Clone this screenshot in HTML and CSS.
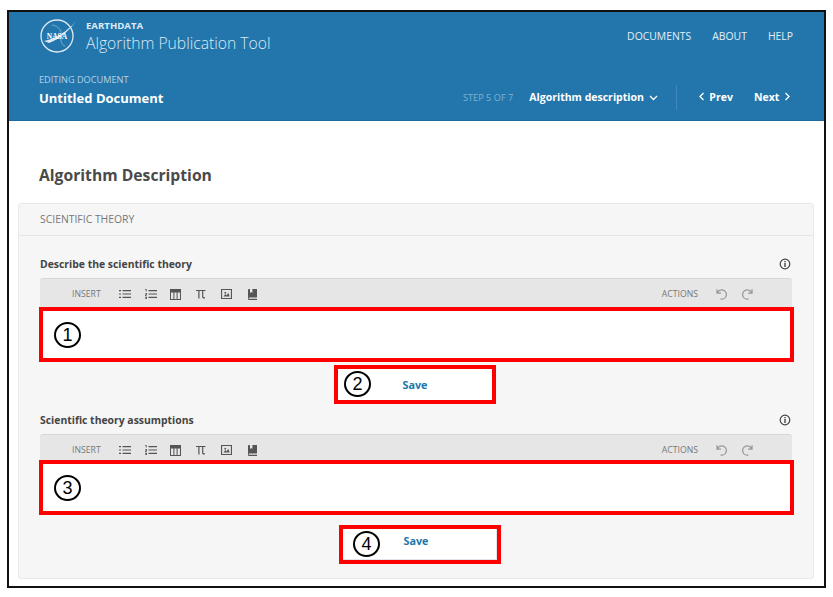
FILE: index.html
```html
<!DOCTYPE html>
<html lang="en">
<head>
  <meta charset="UTF-8" />
  <title>Algorithm Publication Tool</title>
  <link rel="stylesheet" href="styles.css">
</head>
<body>
  <svg class="sprites" width="0" height="0">
    <symbol id="i-ul" viewBox="0 0 12 10"><path d="M0 1h2v1.200H0zM3.500 1H12v1.200H3.500zM0 4.400h2v1.200H0zM3.500 4.400H12v1.200H3.500zM0 7.800h2V9H0zM3.500 7.800H12V9H3.500z" fill="#555"/></symbol>
    <symbol id="i-ol" viewBox="0 0 12 10"><path d="M0 0h1.600v2.600H.8V.8H0zM0 4h2v2H.8v.6H2v.6H0V5.400h1.200v-.8H0zM0 8h2v2H0v-.6h1.200v-.2H.4v-.4h.8v-.2H0zM3.500 1H12v1.200H3.500zM3.500 4.400H12v1.200H3.500zM3.500 7.800H12V9H3.500z" fill="#555"/></symbol>
    <symbol id="i-table" viewBox="0 0 11 11"><path d="M0 0h11v11H0zM1 3.400V10h2.400V3.400zm3.400 0V10h2.200V3.400zm3.200 0V10H10V3.400z" fill="#555" fill-rule="evenodd"/></symbol>
    <symbol id="i-pi" viewBox="0 0 10 10"><path d="M0 1h9.500v1.100H7.300v5.500c0 .6.300.8 1.700.7v1.100c-2 .2-2.900-.3-2.900-1.700V2.100H3.500v7.400H2.300V2.100H0z" fill="#555"/></symbol>
    <symbol id="i-img" viewBox="0 0 11 10"><path d="M0 0h11v10H0zM1.100 1.100v7.800h8.800V1.100z" fill="#555" fill-rule="evenodd"/><path d="M2.400 7.400l2-2.400 1.300 1.400 1.600-2.600 1.400 3.600zM3.400 3.800a.9.9 0 1 0 0-.1z" fill="#555"/></symbol>
    <symbol id="i-book" viewBox="0 0 9 11"><path d="M0 1.200C0 .4.500 0 1.200 0H2v4l1.200-1 1.200 1V0H9v8.600H1.400c-.5 0-.8.200-.8.500s.3.600.8.600H9V11H1.400C.5 11 0 10.300 0 9.400z" fill="#555"/></symbol>
    <symbol id="i-undo" viewBox="0 0 12 12"><path d="M1 1.200v4h4M1.400 5a4.600 4.600 0 1 1 3.200 6" fill="none" stroke="#999" stroke-width="1.300"/></symbol>
    <symbol id="i-redo" viewBox="0 0 12 12"><path d="M11 1.200v4H7M10.600 5a4.600 4.600 0 1 0-3.200 6" fill="none" stroke="#999" stroke-width="1.300"/></symbol>
    <symbol id="i-info" viewBox="0 0 12 12"><circle cx="6" cy="6" r="4.800" fill="none" stroke="#444" stroke-width="1.200"/><path d="M5.300 2.900h1.400v1.300H5.300zM5.300 5h1.400v4H5.300z" fill="#444"/></symbol>
  </svg>

  <div class="frame">
    <header class="masthead">
      <div class="top-row">
        <div class="brand">
          <svg class="logo" width="40" height="36" viewBox="0 0 40 36">
            <circle cx="18" cy="18" r="16" fill="none" stroke="#dfeaf2" stroke-width="1.300"/>
            <path d="M5 23c11-2 24-10 32-20-6 9-16 18-27 22z" fill="#dfeaf2"/>
            <path d="M13 7c7 1 10 6 9 11s1 9 4 10" fill="none" stroke="#9fc4dc" stroke-width=".7"/>
            <text x="18" y="21" class="logo-text" text-anchor="middle">NASA</text>
          </svg>
          <div class="brand-text">
            <div class="brand-small">EARTHDATA</div>
            <div class="brand-name">Algorithm Publication Tool</div>
          </div>
        </div>
        <nav class="main-nav">
          <a>DOCUMENTS</a>
          <a>ABOUT</a>
          <a>HELP</a>
        </nav>
      </div>
      <div class="doc-row">
        <div class="doc-title">
          <div class="doc-eyebrow">EDITING DOCUMENT</div>
          <div class="doc-name">Untitled Document</div>
        </div>
        <div class="stepper">
          <span class="step-count">STEP 5 OF 7</span>
          <span class="step-name">Algorithm description
            <svg width="9" height="6" viewBox="0 0 9 6"><path d="M1 1l3.500 3.500L8 1" class="chev"/></svg>
          </span>
          <span class="step-divider"></span>
          <span class="step-link prev">
            <svg width="7" height="9" viewBox="0 0 7 9"><path d="M5.500 1L2 4.500 5.500 8" class="chev"/></svg>
            Prev
          </span>
          <span class="step-link next">Next
            <svg width="7" height="9" viewBox="0 0 7 9"><path d="M1.500 1L5 4.500 1.500 8" class="chev"/></svg>
          </span>
        </div>
      </div>
    </header>

    <main class="content">
      <h1>Algorithm Description</h1>
      <section class="panel">
        <div class="panel-head">SCIENTIFIC THEORY</div>
        <div class="panel-body">

          <div class="field-label first">
            <span>Describe the scientific theory</span>
            <svg width="12" height="12"><use href="#i-info"/></svg>
          </div>
          <div class="toolbar">
            <span class="tool-label">INSERT</span>
            <svg class="t-ul" width="12" height="10"><use href="#i-ul"/></svg>
            <svg class="t-ol" width="12" height="10"><use href="#i-ol"/></svg>
            <svg class="t-table" width="11" height="11"><use href="#i-table"/></svg>
            <svg class="t-pi" width="10" height="10"><use href="#i-pi"/></svg>
            <svg class="t-img" width="11" height="10"><use href="#i-img"/></svg>
            <svg class="t-book" width="9" height="11"><use href="#i-book"/></svg>
            <span class="tool-label actions">ACTIONS</span>
            <svg class="t-undo" width="12" height="12"><use href="#i-undo"/></svg>
            <svg class="t-redo" width="12" height="12"><use href="#i-redo"/></svg>
          </div>
          <div class="editor"><span class="marker">1</span></div>
          <div class="save-row">
            <button class="save-btn"><span class="marker">2</span>Save</button>
          </div>

          <div class="field-label">
            <span>Scientific theory assumptions</span>
            <svg width="12" height="12"><use href="#i-info"/></svg>
          </div>
          <div class="toolbar">
            <span class="tool-label">INSERT</span>
            <svg class="t-ul" width="12" height="10"><use href="#i-ul"/></svg>
            <svg class="t-ol" width="12" height="10"><use href="#i-ol"/></svg>
            <svg class="t-table" width="11" height="11"><use href="#i-table"/></svg>
            <svg class="t-pi" width="10" height="10"><use href="#i-pi"/></svg>
            <svg class="t-img" width="11" height="10"><use href="#i-img"/></svg>
            <svg class="t-book" width="9" height="11"><use href="#i-book"/></svg>
            <span class="tool-label actions">ACTIONS</span>
            <svg class="t-undo" width="12" height="12"><use href="#i-undo"/></svg>
            <svg class="t-redo" width="12" height="12"><use href="#i-redo"/></svg>
          </div>
          <div class="editor overlap"><span class="marker">3</span></div>
          <div class="save-row second">
            <button class="save-btn"><span class="marker">4</span>Save</button>
          </div>

        </div>
      </section>
    </main>
  </div>
</body>
</html>
```

FILE: styles.css
```css
* {
  box-sizing: border-box;
}
html, body {
  margin: 0;
  height: 597px;
  overflow: hidden;
}
body {
  background: #fff;
  font-family: "Open Sans", sans-serif;
  color: #444;
}
.sprites {
  position: absolute;
}
.frame {
  width: 819px;
  height: 578px;
  margin: 10px 0 0 7px;
  border: 2px solid #111;
  background: #fff;
}

/* header */
.masthead {
  height: 109px;
  background: #2276ac;
  border-bottom: 1px solid #1d6a9c;
  color: #fff;
}
.top-row {
  display: flex;
  justify-content: space-between;
  height: 60px;
  padding: 6px 31px 0 30px;
}
.brand {
  display: flex;
}
.logo {
  margin-right: 7px;
}
.logo-text {
  font: 700 7.5px "Liberation Serif", serif;
  fill: #fff;
}
.brand-text {
  padding-top: 1px;
}
.brand-small {
  font-size: 9.6px;
  font-weight: 700;
  line-height: 13px;
  color: #dcebf5;
}
.brand-name {
  margin-top: 1px;
  font-size: 15.7px;
  font-weight: 300;
  line-height: 21px;
  color: #dcebf5;
}
.main-nav {
  display: flex;
  gap: 21px;
  padding-top: 11px;
  font-size: 10.4px;
  color: #e3eff7;
}
.doc-row {
  display: flex;
  justify-content: space-between;
  padding: 0 31px 0 30px;
}
.doc-eyebrow {
  margin-top: 1px;
  font-size: 9.2px;
  line-height: 14px;
  color: #b5d2e6;
}
.doc-name {
  margin-top: 2px;
  font-size: 13px;
  font-weight: 700;
  line-height: 18px;
}
.stepper {
  display: flex;
  align-items: center;
  height: 26px;
  margin-top: 12px;
  font-size: 10.5px;
  font-weight: 700;
}
.chev {
  fill: none;
  stroke: #fff;
  stroke-width: 1.3;
}
.step-count {
  margin-right: 16px;
  font-size: 9.2px;
  font-weight: 400;
  color: #7fb1d2;
}
.step-name svg {
  margin-left: 2px;
}
.step-divider {
  width: 1px;
  height: 25px;
  margin: 0 19px 0 18px;
  background: #3f88b8;
}
.step-link svg {
  margin: 0 2px;
}
.next {
  margin-left: 21px;
}

/* page content */
.content {
  padding: 0 10px 0 9px;
}
h1 {
  margin: 0;
  padding: 44px 0 18px 21px;
  font-size: 15.7px;
  font-weight: 700;
  line-height: 20px;
  color: #4a4a4a;
}
.panel {
  width: 796px;
  height: 376px;
  background: #f6f6f6;
  border: 1px solid #e8e8e8;
  border-radius: 3px;
}
.panel-head {
  height: 32px;
  padding-left: 21px;
  border-bottom: 1px solid #e4e4e4;
  font-size: 10.4px;
  line-height: 30px;
  color: #777;
}
.panel-body {
  padding: 0 20px 0 21px;
}
.field-label {
  display: flex;
  align-items: center;
  justify-content: space-between;
  height: 16px;
  padding-right: 2px;
  font-size: 10.4px;
  font-weight: 700;
  color: #444;
}
.field-label.first {
  margin-top: 20px;
}
.toolbar {
  display: flex;
  align-items: center;
  width: 752px;
  height: 29px;
  margin-top: 6px;
  padding-top: 2px;
  background: #e6e6e6;
  border-top: 1px solid #d6d6d6;
  border-radius: 3px 3px 0 0;
}
.tool-label {
  margin-left: 32px;
  font-size: 8.7px;
  color: #777;
}
.t-ul { margin-left: 18px; }
.t-ol { margin-left: 14px; }
.t-table { margin-left: 13px; }
.t-pi { margin-left: 15px; }
.t-img { margin-left: 15px; }
.t-book { margin-left: 16px; }
.tool-label.actions {
  margin-left: auto;
}
.t-undo { margin-left: 18px; }
.t-redo { margin-left: 13px; margin-right: 39px; }

/* numbered red annotations */
.editor {
  position: relative;
  width: 755px;
  height: 55px;
  margin-left: -1px;
  background: #fff;
  border: 4px solid #f00;
}
.editor.overlap {
  margin-top: -3px;
}
.marker {
  position: absolute;
  top: 11px;
  left: 11px;
  width: 27px;
  height: 26px;
  border: 2px solid #000;
  border-radius: 50%;
  background: #fff;
  font: 400 18px/22px "Liberation Sans", sans-serif;
  color: #000;
  text-align: center;
}
.save-row {
  display: flex;
  height: 50px;
  padding: 3px 0 0 294px;
}
.save-btn {
  position: relative;
  width: 162px;
  height: 39px;
  padding: 0;
  background: #fff;
  border: 4px solid #f00;
  font: 700 10.8px "Open Sans", sans-serif;
  color: #2276ac;
}
.save-btn .marker {
  top: 2px;
  left: 6px;
}
.save-row.second {
  height: 54px;
  padding: 10px 0 0 299px;
}
.save-row.second .save-btn {
  padding: 0 8px 9px 0;
  box-shadow: inset -1px -1px 0 #dfe5ea;
}
.save-row.second .marker {
  left: 10px;
}
```
